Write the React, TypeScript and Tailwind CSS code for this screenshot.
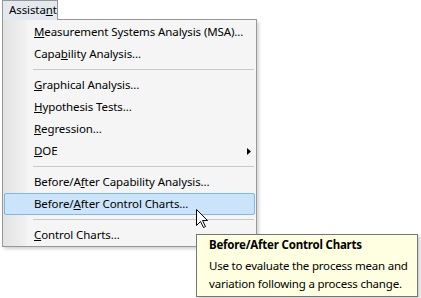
import React from "react";

type Item =
  | { kind: "item"; pre: string; u: string; post: string; sub?: boolean; active?: boolean }
  | { kind: "sep" };

const items: Item[] = [
  { kind: "item", pre: "", u: "M", post: "easurement Systems Analysis (MSA)..." },
  { kind: "item", pre: "Capa", u: "b", post: "ility Analysis..." },
  { kind: "sep" },
  { kind: "item", pre: "", u: "G", post: "raphical Analysis..." },
  { kind: "item", pre: "", u: "H", post: "ypothesis Tests..." },
  { kind: "item", pre: "", u: "R", post: "egression..." },
  { kind: "item", pre: "", u: "D", post: "OE", sub: true },
  { kind: "sep" },
  { kind: "item", pre: "Before/A", u: "f", post: "ter Capability Analysis..." },
  { kind: "item", pre: "Before/", u: "A", post: "fter Control Charts...", active: true },
  { kind: "sep" },
  { kind: "item", pre: "", u: "C", post: "ontrol Charts..." },
];

export default function App() {
  return (
    <div className="relative w-[421px] h-[298px] bg-white overflow-hidden font-['Noto_Sans',sans-serif] text-[11.5px] tracking-[-0.1px] text-black">
      {/* menu bar tab */}
      <div className="ml-[2px] w-[255px] h-[20px] flex">
        <div className="w-[56px] h-[20px] border-l border-t border-r border-[#979797] bg-[#e4e9ef] pl-[6px] leading-[18px]">
          Assista<u>n</u>t
        </div>
        <div className="flex-1 border-b border-[#979797]" />
      </div>
      {/* dropdown */}
      <div className="ml-[2px] w-[255px] border-l border-r border-b border-[#979797] bg-[linear-gradient(90deg,#e2e2e2_0px,#f1f1f1_23px,#f5f5f5_24px)] pt-[1px] shadow-[2px_2px_3px_rgba(0,0,0,0.18)]">
        {items.map((it, i) =>
          it.kind === "sep" ? (
            <div key={i} className="h-[9px] pt-[4px] ml-[30px] mr-[2px]">
              <div className="h-[1px] bg-[#c9c9c9]" />
            </div>
          ) : (
            <div
              key={i}
              className={
                "h-[22px] mx-[1px] pl-[29px] pr-[3px] flex items-center justify-between border rounded-[2px] " +
                (it.active ? "border-[#7db7ec] bg-[#cbe4fa]" : "border-transparent")
              }
            >
              <span className="leading-[18px] whitespace-nowrap">
                {it.pre}
                <u>{it.u}</u>
                {it.post}
              </span>
              {it.sub && (
                <svg width="4" height="7" viewBox="0 0 4 7" className="block">
                  <polygon points="0,0 4,3.5 0,7" fill="#000" />
                </svg>
              )}
            </div>
          )
        )}
      </div>

      {/* tooltip */}
      <div className="absolute left-[196px] top-[234px] w-[222px] h-[63px] border border-[#767676] bg-[#ffffe1] pl-[12px] pt-[1px] shadow-[2px_2px_3px_rgba(0,0,0,0.2)] tracking-[-0.2px]">
        <div className="font-bold leading-[18px] mb-[3px] whitespace-nowrap">Before/After Control Charts</div>
        <div className="leading-[18px] whitespace-nowrap">Use to evaluate the process mean and</div>
        <div className="leading-[18px] whitespace-nowrap">variation following a process change.</div>
      </div>

      {/* cursor */}
      <svg className="absolute left-[196px] top-[209px]" width="13" height="20" viewBox="0 0 13 20">
        <polygon
          points="0.5,0.5 0.5,16.5 4.5,12.5 7.5,18.5 9.5,17.5 6.5,11.5 11.5,11.5"
          fill="#fff"
          stroke="#000"
          strokeWidth="1"
          strokeLinejoin="miter"
        />
      </svg>
    </div>
  );
}
